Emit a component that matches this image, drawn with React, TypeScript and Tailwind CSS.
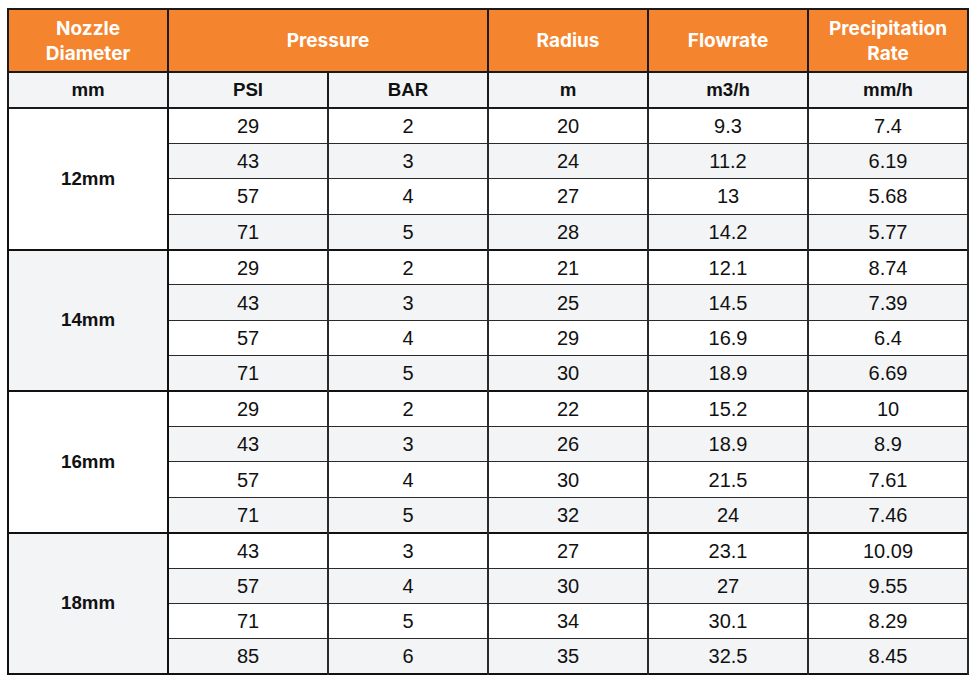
const groups = [
  { size: "12mm", rows: [["29", "2", "20", "9.3", "7.4"], ["43", "3", "24", "11.2", "6.19"], ["57", "4", "27", "13", "5.68"], ["71", "5", "28", "14.2", "5.77"]] },
  { size: "14mm", rows: [["29", "2", "21", "12.1", "8.74"], ["43", "3", "25", "14.5", "7.39"], ["57", "4", "29", "16.9", "6.4"], ["71", "5", "30", "18.9", "6.69"]] },
  { size: "16mm", rows: [["29", "2", "22", "15.2", "10"], ["43", "3", "26", "18.9", "8.9"], ["57", "4", "30", "21.5", "7.61"], ["71", "5", "32", "24", "7.46"]] },
  { size: "18mm", rows: [["43", "3", "27", "23.1", "10.09"], ["57", "4", "30", "27", "9.55"], ["71", "5", "34", "30.1", "8.29"], ["85", "6", "35", "32.5", "8.45"]] },
];

const head = "border-2 border-[#1a1a1a] bg-[#f5842f] text-white font-bold text-[19px] leading-[25px] [font-family:Inter,'Liberation_Sans',sans-serif]";
const sub = "border-2 border-[#1a1a1a] bg-[#f3f4f6] font-bold text-[18.7px] h-[36px]";
const cell = "border-x-2 border-y-[1.5px] border-[#2a2a2a] text-[20px]";

export default function App() {
  return (
    <div className="min-h-screen bg-white pl-[7px] pt-[8px] [font-family:'Liberation_Sans',Arial,sans-serif] text-[#111]">
      <table className="w-[959px] table-fixed border-collapse border-[2.5px] border-[#111] text-center">
        <colgroup>
          {[0, 1, 2, 3, 4, 5].map((i) => <col key={i} className="w-[160px]" />)}
        </colgroup>
        <thead>
          <tr className="h-[63px]">
            <th className={head}>Nozzle<br />Diameter</th>
            <th className={head} colSpan={2}>Pressure</th>
            <th className={head}>Radius</th>
            <th className={head}>Flowrate</th>
            <th className={head}>Precipitation<br />Rate</th>
          </tr>
          <tr>
            <th className={sub}>mm</th>
            <th className={sub}>PSI</th>
            <th className={sub}>BAR</th>
            <th className={sub}>m</th>
            <th className={sub}>m3/h</th>
            <th className={sub}>mm/h</th>
          </tr>
        </thead>
        {groups.map((g, gi) => (
          <tbody key={g.size} className="border-t-2 border-[#111]">
            {g.rows.map((r, ri) => (
              <tr key={ri} className={`h-[35.4px] ${ri % 2 === 1 ? "bg-[#f3f4f6]" : "bg-white"} ${ri === 0 ? "border-t-2 border-[#111]" : ""}`}>
                {ri === 0 && (
                  <td rowSpan={4} className={`border-2 border-[#111] font-bold text-[18.7px] ${gi % 2 === 1 ? "bg-[#f3f4f6]" : "bg-white"}`}>
                    {g.size}
                  </td>
                )}
                {r.map((v, ci) => (
                  <td key={ci} className={cell}>{v}</td>
                ))}
              </tr>
            ))}
          </tbody>
        ))}
      </table>
    </div>
  );
}
